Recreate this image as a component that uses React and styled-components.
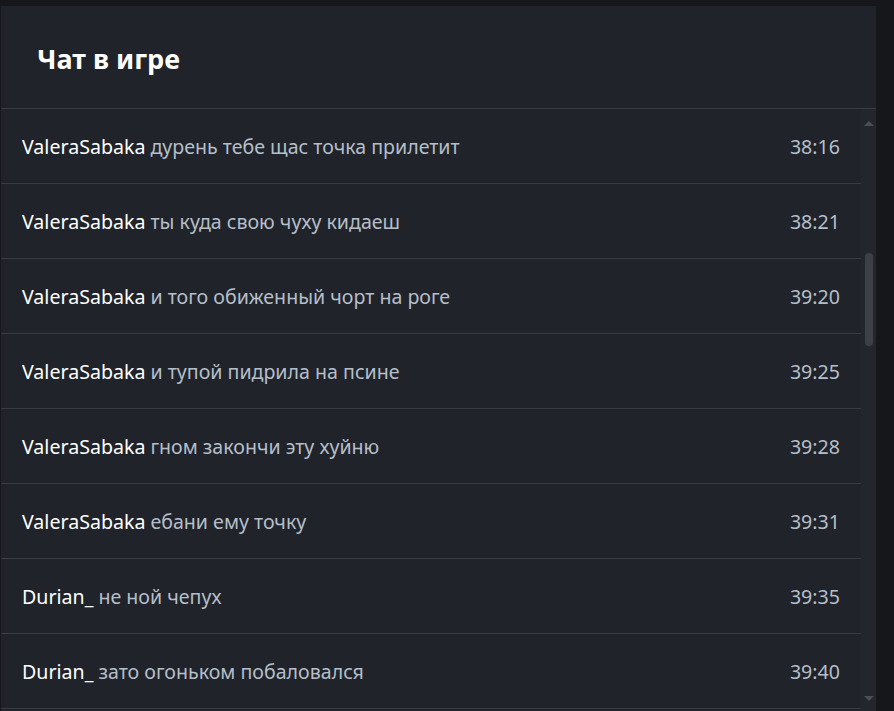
import styled, { createGlobalStyle } from "styled-components";

const GlobalStyle = createGlobalStyle`
    html, body {
        margin: 0;
        padding: 0;
        background-color: #16171b;
        font-family: "Noto Sans", "Open Sans", sans-serif;
    }
`

const messages = [
    { name: 'ValeraSabaka', text: 'дурень тебе щас точка прилетит', time: '38:16' },
    { name: 'ValeraSabaka', text: 'ты куда свою чуху кидаеш', time: '38:21' },
    { name: 'ValeraSabaka', text: 'и того обиженный чорт на роге', time: '39:20' },
    { name: 'ValeraSabaka', text: 'и тупой пидрила на псине', time: '39:25' },
    { name: 'ValeraSabaka', text: 'гном закончи эту хуйню', time: '39:28' },
    { name: 'ValeraSabaka', text: 'ебани ему точку', time: '39:31' },
    { name: 'Durian_', text: 'не ной чепух', time: '39:35' },
    { name: 'Durian_', text: 'зато огоньком побаловался', time: '39:40' },
];

const Page = styled.div`
    height: 711px;
    padding: 6px 18px 0 1px;
    box-sizing: border-box;
    overflow: hidden;
`

const Panel = styled.div`
    height: 100%;
    display: flex;
    flex-direction: column;
    background-color: #202329;
`

const Header = styled.div`
    height: 102px;
    flex-shrink: 0;
    display: flex;
    align-items: center;
    padding: 0 36px;
    border-bottom: 1px solid #393c43;

    h2 {
        margin: 2px 0 0;
        color: #ffffff;
        font-size: 27px;
        font-weight: 700;
    }
`

const Body = styled.div`
    flex: 1;
    display: flex;
    min-height: 0;
`

const List = styled.div`
    flex: 1;
    overflow: hidden;
`

const Row = styled.div`
    height: 74px;
    display: flex;
    align-items: center;
    padding: 0 21px;
    border-bottom: 1px solid #393c43;
    font-size: 19.6px;

    .name {
        color: #ffffff;
    }

    .text {
        flex: 1;
        color: #b5bfca;
        margin-left: 5px;
    }

    .time {
        color: #b5bfca;
    }
`

const ScrollTrack = styled.div`
    width: 15px;
    flex-shrink: 0;
    display: flex;
    flex-direction: column;
    align-items: center;
    background-color: #23262c;
`

const Arrow = styled.div`
    width: 0;
    height: 0;
    border-left: 5px solid transparent;
    border-right: 5px solid transparent;
    ${props => props.$down
        ? 'border-top: 5px solid #4b4e55; margin: auto 0 10px;'
        : 'border-bottom: 5px solid #4b4e55; margin: 12px 0 0;'}
`

const Thumb = styled.div`
    width: 8px;
    height: 93px;
    margin-top: 127px;
    border-radius: 4px;
    background-color: #3d4047;
`

export default function App(){
    return(
        <>
            <GlobalStyle/>
            <Page>
                <Panel>
                    <Header>
                        <h2>Чат в игре</h2>
                    </Header>
                    <Body>
                        <List>
                            {messages.map((m, i) => (
                                <Row key={i}>
                                    <span className='name'>{m.name}</span>
                                    <span className='text'>{m.text}</span>
                                    <span className='time'>{m.time}</span>
                                </Row>
                            ))}
                        </List>
                        <ScrollTrack>
                            <Arrow/>
                            <Thumb/>
                            <Arrow $down/>
                        </ScrollTrack>
                    </Body>
                </Panel>
            </Page>
        </>
    );
}
